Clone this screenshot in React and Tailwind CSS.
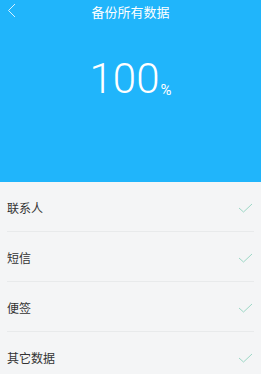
import React from "react";

const ITEMS = ["联系人", "短信", "便签", "其它数据"];

const Check = () => (
  <svg width="15" height="10" viewBox="0 0 15 10" fill="none">
    <path d="M1 5 L5.5 9 L14 1" stroke="#9dd8c6" strokeWidth="1" />
  </svg>
);

const App = () => {
  return (
    <div
      className="w-[261px] h-[374px] overflow-hidden bg-[#f4f5f6]"
      style={{ fontFamily: '"Noto Sans CJK SC", Roboto, sans-serif' }}
    >
      <div className="h-[182px] bg-[#20b5fb] flex flex-col">
        <div className="relative h-[22px] flex items-center justify-center">
          <svg
            className="absolute left-[7px] top-[3px]"
            width="9"
            height="15"
            viewBox="0 0 9 15"
            fill="none"
          >
            <path d="M8 1 L1.5 7.5 L8 14" stroke="#d6f1ff" strokeWidth="1" />
          </svg>
          <span className="text-[13px] leading-none text-white">备份所有数据</span>
        </div>
        <div className="flex justify-center items-end mt-[36px] text-white">
          <span
            className="text-[42px] leading-none font-light"
            style={{ fontFamily: "Roboto, sans-serif" }}
          >
            100
          </span>
          <span
            className="text-[15px] leading-none ml-[1px] mb-[2px]"
            style={{ fontFamily: "Roboto, sans-serif" }}
          >
            %
          </span>
        </div>
      </div>
      <div className="flex flex-col">
        {ITEMS.map((item, i) => (
          <div
            key={item}
            className={`mx-[7px] h-[50px] pt-[2px] flex items-center justify-between ${
              i < ITEMS.length - 1 ? "border-b border-[#e8eaeb]" : ""
            }`}
          >
            <span className="text-[12px] text-[#333]">{item}</span>
            <span className="mr-[1px]">
              <Check />
            </span>
          </div>
        ))}
      </div>
    </div>
  );
};

export default App;
